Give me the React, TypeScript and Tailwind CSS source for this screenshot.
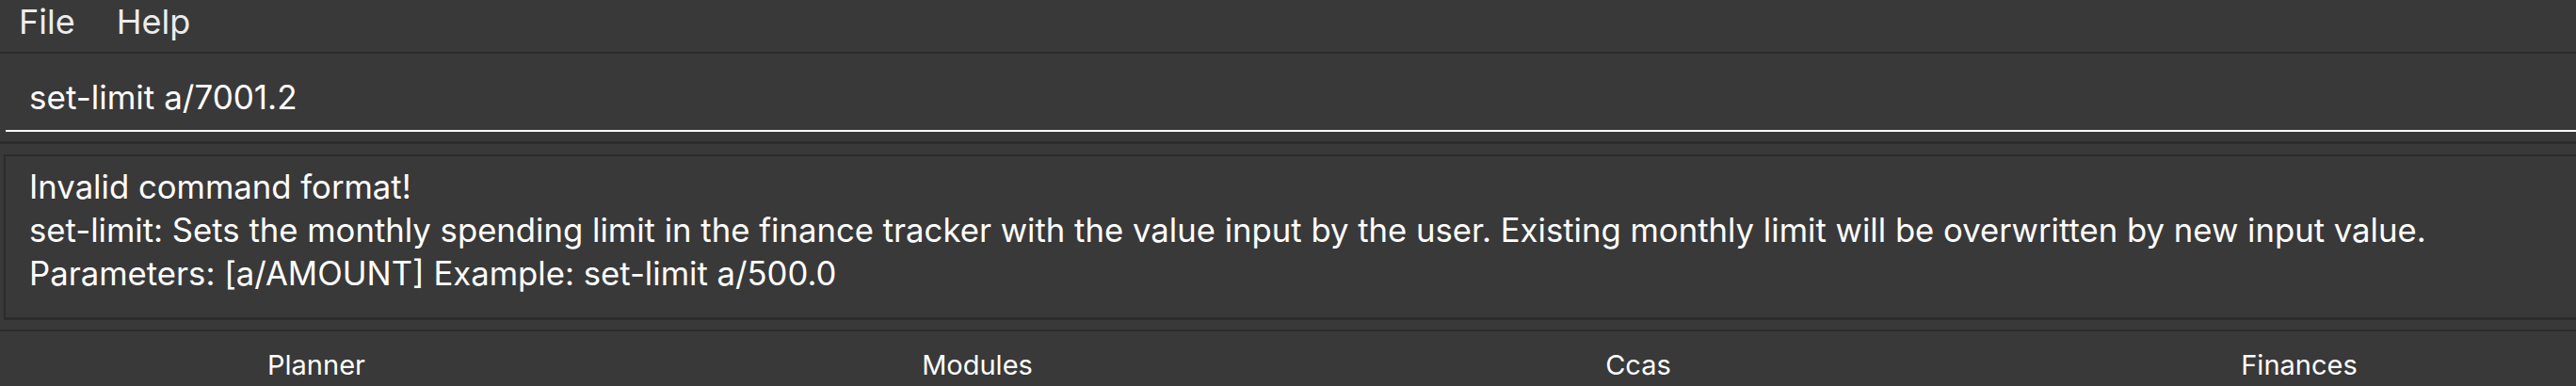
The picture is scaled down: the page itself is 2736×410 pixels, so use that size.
import React from "react";

const tabs = ["Planner", "Modules", "Ccas", "Finances"];

const resultLines = [
  "Invalid command format!",
  "set-limit: Sets the monthly spending limit in the finance tracker with the value input by the user. Existing monthly limit will be overwritten by new input value.",
  "Parameters: [a/AMOUNT] Example: set-limit a/500.0",
];

export default function App() {
  return (
    <div className="flex h-[410px] w-[2736px] flex-col overflow-hidden bg-[#393939] font-['Inter','Liberation_Sans',sans-serif] text-white">
      {/* menu bar */}
      <div className="flex h-[55px] shrink-0 gap-[44px] pl-[20px] text-[36px] leading-[46px] text-[#ececec]">
        <span>File</span>
        <span>Help</span>
      </div>
      <div className="h-[2px] shrink-0 bg-[#2b2b2b]" />

      {/* command box */}
      <div className="shrink-0 pb-[10px] pl-[6px] pt-[16px]">
        <div className="border-b-2 border-white pb-[15px] pl-[25px] pt-[10px] text-[35px] leading-[40px]">
          set-limit a/7001.2
        </div>
      </div>
      <div className="h-[3px] shrink-0 bg-[#2b2b2b]" />

      {/* result display */}
      <div className="shrink-0 pb-[10px] pl-[4px] pt-[11px]">
        <div className="h-[176px] border-b-[3px] border-l-2 border-t-2 border-[#2b2b2b] pl-[25px] pt-[9px] text-[34.7px] leading-[46px]">
          {resultLines.map((l) => (
            <div key={l} className="whitespace-nowrap">
              {l}
            </div>
          ))}
        </div>
      </div>
      <div className="h-[2px] shrink-0 bg-[#2b2b2b]" />

      {/* tabs */}
      <div className="ml-[-15px] flex flex-1">
        {tabs.map((t) => (
          <div
            key={t}
            className="w-[702px] shrink-0 pt-[18px] text-center text-[29px] leading-[36px]"
          >
            {t}
          </div>
        ))}
      </div>
    </div>
  );
}
